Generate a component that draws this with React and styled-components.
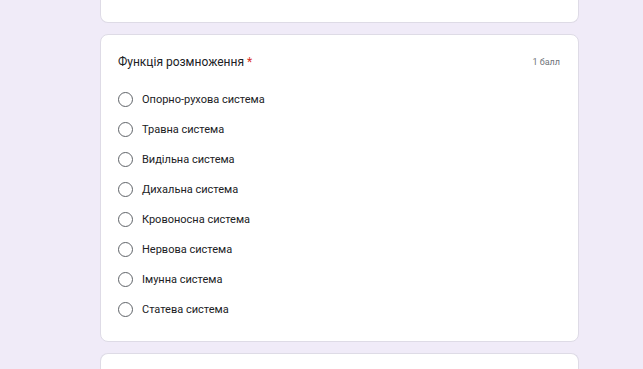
import React from "react";
import styled, { createGlobalStyle } from "styled-components";

const Global = createGlobalStyle`
  body {
    margin: 0;
    background: #f0ebf8;
    font-family: Roboto, "Noto Sans", Arial, sans-serif;
  }
`;

const Page = styled.div`
  width: 643px;
  height: 369px;
  overflow: hidden;
  padding-left: 100px;
  box-sizing: border-box;
  display: flex;
  flex-direction: column;
  gap: 11px;
`;

const Card = styled.div`
  width: 479px;
  box-sizing: border-box;
  background: #fff;
  border: 1px solid #dedbe6;
  border-radius: ${(p) => (p.$cut === "top" ? "0 0 8px 8px" : p.$cut === "bottom" ? "8px 8px 0 0" : "8px")};
  ${(p) => p.$cut === "top" && "border-top: none;"}
  ${(p) => p.$cut === "bottom" && "border-bottom: none;"}
  height: ${(p) => p.$h || "auto"};
  flex-shrink: 0;
`;

const Body = styled.div`
  padding: 18px 18px 17px 17px;
`;

const Head = styled.div`
  display: flex;
  justify-content: space-between;
  align-items: center;
  height: 18px;
  margin-bottom: 13px;
`;

const Title = styled.div`
  font-size: 12px;
  color: #202124;
`;

const Star = styled.span`
  color: #d93025;
  margin-left: 3px;
`;

const Points = styled.div`
  font-size: 9px;
  color: #70757a;
`;

const List = styled.div`
  display: flex;
  flex-direction: column;
`;

const Option = styled.label`
  display: flex;
  align-items: center;
  height: 30px;
  gap: 9px;
  font-size: 11px;
  color: #202124;
`;

const Radio = styled.span`
  width: 15px;
  height: 15px;
  box-sizing: border-box;
  border: 1.5px solid #5f6368;
  border-radius: 50%;
  flex-shrink: 0;
`;

const options = [
  "Опорно-рухова система",
  "Травна система",
  "Видільна система",
  "Дихальна система",
  "Кровоносна система",
  "Нервова система",
  "Імунна система",
  "Статева система",
];

export default function App() {
  return (
    <>
      <Global />
      <Page>
        <Card $cut="top" $h="23px" />
        <Card>
          <Body>
            <Head>
              <Title>
                Функція розмноження<Star>*</Star>
              </Title>
              <Points>1 балл</Points>
            </Head>
            <List>
              {options.map((o) => (
                <Option key={o}>
                  <Radio />
                  {o}
                </Option>
              ))}
            </List>
          </Body>
        </Card>
        <Card $cut="bottom" $h="40px" />
      </Page>
    </>
  );
}
